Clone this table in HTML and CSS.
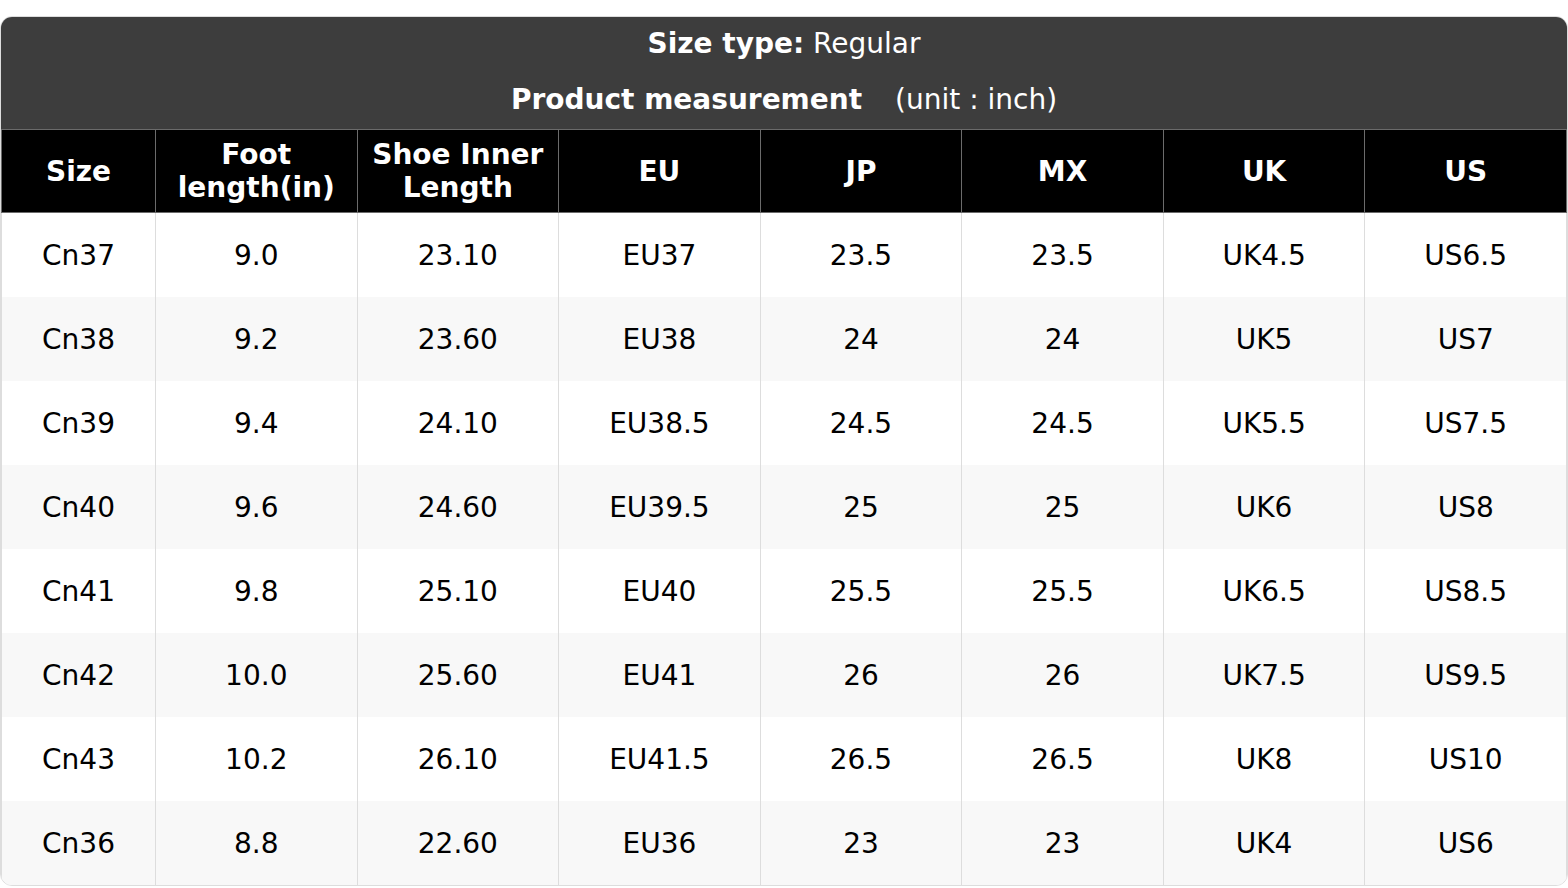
FILE: index.html
```html
<!DOCTYPE html>
<html>
<head>
<meta charset="utf-8">
<link rel="stylesheet" href="styles.css">
</head>
<body>
<div class="chart">
  <div class="caption">
    <div class="cap-line"><b>Size type:</b> Regular</div>
    <div class="cap-line"><b>Product measurement</b><span class="unit">(unit : inch)</span></div>
  </div>
  <table class="sizes">
    <colgroup>
      <col class="c-first"><col><col><col><col><col><col><col>
    </colgroup>
    <thead>
      <tr>
        <th>Size</th><th>Foot<br>length(in)</th><th>Shoe Inner<br>Length</th><th>EU</th><th>JP</th><th>MX</th><th>UK</th><th>US</th>
      </tr>
    </thead>
    <tbody>
      <tr><td>Cn37</td><td>9.0</td><td>23.10</td><td>EU37</td><td>23.5</td><td>23.5</td><td>UK4.5</td><td>US6.5</td></tr>
      <tr><td>Cn38</td><td>9.2</td><td>23.60</td><td>EU38</td><td>24</td><td>24</td><td>UK5</td><td>US7</td></tr>
      <tr><td>Cn39</td><td>9.4</td><td>24.10</td><td>EU38.5</td><td>24.5</td><td>24.5</td><td>UK5.5</td><td>US7.5</td></tr>
      <tr><td>Cn40</td><td>9.6</td><td>24.60</td><td>EU39.5</td><td>25</td><td>25</td><td>UK6</td><td>US8</td></tr>
      <tr><td>Cn41</td><td>9.8</td><td>25.10</td><td>EU40</td><td>25.5</td><td>25.5</td><td>UK6.5</td><td>US8.5</td></tr>
      <tr><td>Cn42</td><td>10.0</td><td>25.60</td><td>EU41</td><td>26</td><td>26</td><td>UK7.5</td><td>US9.5</td></tr>
      <tr><td>Cn43</td><td>10.2</td><td>26.10</td><td>EU41.5</td><td>26.5</td><td>26.5</td><td>UK8</td><td>US10</td></tr>
      <tr><td>Cn36</td><td>8.8</td><td>22.60</td><td>EU36</td><td>23</td><td>23</td><td>UK4</td><td>US6</td></tr>
    </tbody>
  </table>
</div>
</body>
</html>
```
FILE: styles.css
```css
html, body {
  margin: 0;
  padding: 0;
  background: #ffffff;
}
body {
  padding-top: 16px;
  font-family: "DejaVu Sans", "Liberation Sans", sans-serif;
  font-size: 28px;
  color: #000;
}
.chart {
  width: 1568px;
  box-sizing: border-box;
  border: 1px solid #dddddd;
  border-radius: 12px;
  overflow: hidden;
}
.caption {
  background: #3d3d3d;
  color: #ffffff;
  text-align: center;
}
.cap-line {
  height: 56px;
  line-height: 54px;
}
.unit {
  margin-left: 33px;
}
.sizes {
  width: 100%;
  border-collapse: collapse;
  table-layout: fixed;
}
.c-first {
  width: 154px;
}
.sizes th {
  background: #000;
  color: #fff;
  font-weight: bold;
  border: 1px solid #6b6b6b;
  padding: 8px 4px;
  height: 66px;
  line-height: 33px;
  text-align: center;
  vertical-align: middle;
}
.sizes td {
  height: 84px;
  padding: 0 4px;
  text-align: center;
  vertical-align: middle;
  border-left: 1px solid #dddddd;
  border-right: 1px solid #dddddd;
}
.sizes tbody tr:nth-child(even) td {
  background: #f8f8f8;
}
```
